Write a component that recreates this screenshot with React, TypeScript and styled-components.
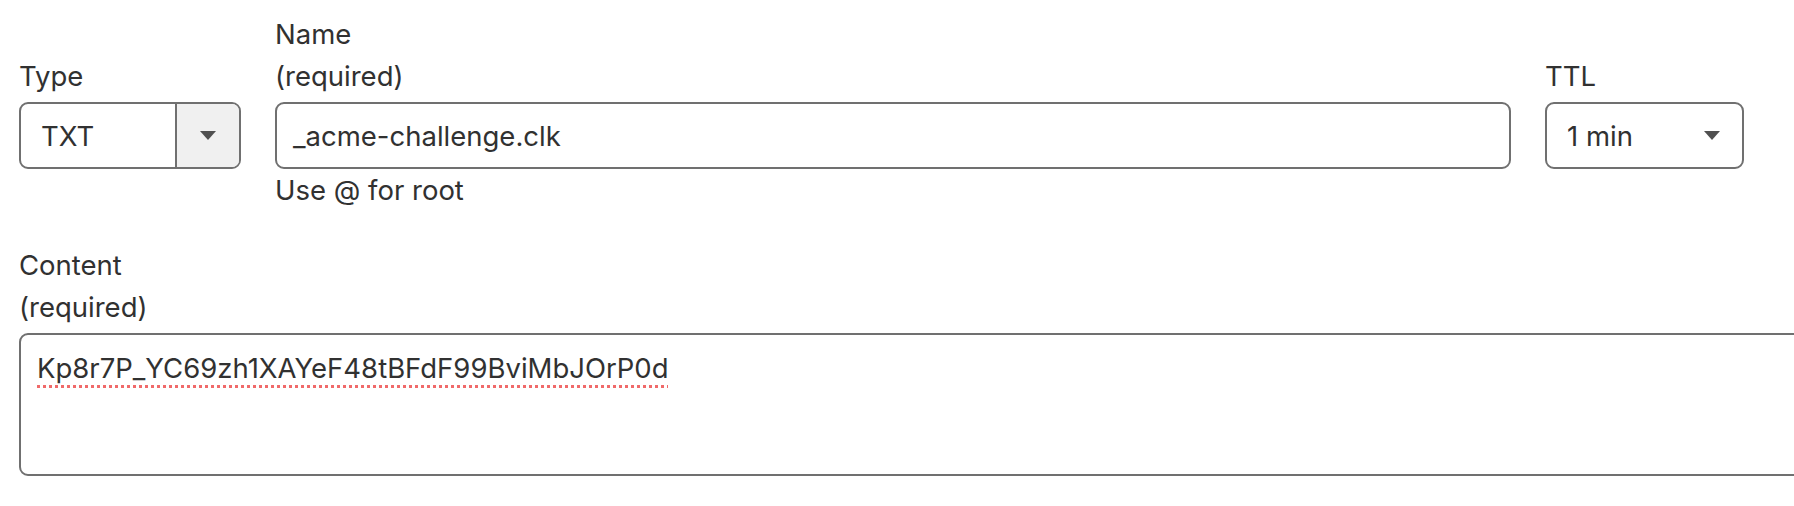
import React from "react";
import styled, { createGlobalStyle } from "styled-components";

const GlobalStyle = createGlobalStyle`
  html, body {
    margin: 0;
    padding: 0;
    background: #ffffff;
    overflow: hidden;
  }
  body {
    font-family: Inter, "Noto Sans", "Liberation Sans", sans-serif;
    color: #313131;
  }
`;

const Form = styled.div`
  padding: 13px 50px 0 19px;
  width: 1794px;
  box-sizing: border-box;
`;

const RecordGrid = styled.div`
  display: grid;
  grid-template-columns: 222px 1fr 199px;
  column-gap: 34px;
  align-items: end;
`;

const Field = styled.div`
  display: flex;
  flex-direction: column;
  align-self: start;
  height: 100%;
  justify-content: flex-start;
`;

const LabelBlock = styled.label`
  display: flex;
  flex-direction: column;
  justify-content: flex-end;
  min-height: 84px;
  margin-bottom: 5px;
  font-size: 27.5px;
  line-height: 42px;
  color: #313131;
`;

const Box = styled.div`
  box-sizing: border-box;
  height: 67px;
  border: 2px solid #707070;
  border-radius: 9px;
  background: #fff;
  display: flex;
  align-items: center;
  font-size: 27.5px;
  color: #313131;
`;

const ComboBox = styled(Box)`
  overflow: hidden;
`;

const ComboValue = styled.div`
  flex: 1;
  padding-left: 20px;
`;

const ComboButton = styled.div`
  width: 62px;
  align-self: stretch;
  border-left: 2px solid #707070;
  background: #f0f0f0;
  display: flex;
  align-items: center;
  justify-content: center;
`;

const TextBox = styled(Box)`
  padding-left: 16px;
`;

const SelectBox = styled(Box)`
  padding: 0 22px 0 20px;
  justify-content: space-between;
`;

const Helper = styled.div`
  font-size: 27.5px;
  line-height: 42px;
  color: #313131;
`;

const ContentSection = styled.div`
  margin-top: 33px;
  display: flex;
  flex-direction: column;
`;

const ContentArea = styled.div`
  box-sizing: border-box;
  width: 1820px;
  height: 143px;
  border: 2px solid #707070;
  border-radius: 9px;
  padding: 12px 16px;
  font-size: 27.5px;
  line-height: 42px;
  color: #313131;
`;

const Misspelled = styled.span`
  text-decoration: underline dotted #f06a6a;
  text-decoration-thickness: 3px;
  text-underline-offset: 7px;
`;

const Caret = () => (
  <svg width="16" height="9" viewBox="0 0 16 9">
    <path d="M0 0 H16 L8 9 Z" fill="#505050" />
  </svg>
);

export default function App() {
  return (
    <>
      <GlobalStyle />
      <Form>
        <RecordGrid>
          <Field>
            <LabelBlock>Type</LabelBlock>
            <ComboBox>
              <ComboValue>TXT</ComboValue>
              <ComboButton>
                <Caret />
              </ComboButton>
            </ComboBox>
          </Field>
          <Field>
            <LabelBlock>
              <span>Name</span>
              <span>(required)</span>
            </LabelBlock>
            <TextBox>_acme-challenge.clk</TextBox>
            <Helper>Use @ for root</Helper>
          </Field>
          <Field>
            <LabelBlock>TTL</LabelBlock>
            <SelectBox>
              <span>1 min</span>
              <Caret />
            </SelectBox>
          </Field>
        </RecordGrid>
        <ContentSection>
          <LabelBlock>
            <span>Content</span>
            <span>(required)</span>
          </LabelBlock>
          <ContentArea>
            <Misspelled>Kp8r7P_YC69zh1XAYeF48tBFdF99BviMbJOrP0d</Misspelled>
          </ContentArea>
        </ContentSection>
      </Form>
    </>
  );
}
